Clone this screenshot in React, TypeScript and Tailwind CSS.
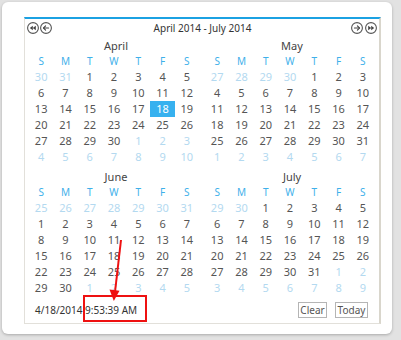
import React from 'react';

const font = { fontFamily: '"Noto Sans", "Open Sans", sans-serif' };

type Day = { d: number; other: boolean; selected: boolean };

// 6 weeks, always starting on a Sunday; a month that starts on Sunday shows a full week before it
function buildMonth(year: number, month: number): Day[] {
  const first = new Date(year, month, 1);
  const back = first.getDay() || 7;
  const start = new Date(year, month, 1 - back);
  const days: Day[] = [];
  for (let i = 0; i < 42; i++) {
    const dt = new Date(start.getFullYear(), start.getMonth(), start.getDate() + i);
    days.push({
      d: dt.getDate(),
      other: dt.getMonth() !== month,
      selected: dt.getFullYear() === 2014 && dt.getMonth() === 3 && dt.getDate() === 18 && dt.getMonth() === month,
    });
  }
  return days;
}

const weekDays = ['S', 'M', 'T', 'W', 'T', 'F', 'S'];

function NavIcon({ kind }: { kind: 'prev2' | 'prev' | 'next' | 'next2' }) {
  return (
    <svg width="12" height="12" viewBox="0 0 12 12" className="block">
      <circle cx="6" cy="6" r="5.4" fill="none" stroke="#555" strokeWidth="1.1" />
      {kind === 'prev' && (
        <g stroke="#444" strokeWidth="1.1" fill="none" strokeLinecap="round" strokeLinejoin="round">
          <path d="M8.6 6H3.6" />
          <path d="M5.6 3.9L3.5 6l2.1 2.1" />
        </g>
      )}
      {kind === 'next' && (
        <g stroke="#444" strokeWidth="1.1" fill="none" strokeLinecap="round" strokeLinejoin="round">
          <path d="M3.4 6h5" />
          <path d="M6.4 3.9L8.5 6 6.4 8.1" />
        </g>
      )}
      {kind === 'prev2' && (
        <g fill="#444">
          <path d="M2.8 6L5.8 3.8v4.4z" />
          <path d="M5.8 6L8.8 3.8v4.4z" />
        </g>
      )}
      {kind === 'next2' && (
        <g fill="#444">
          <path d="M9.2 6L6.2 3.8v4.4z" />
          <path d="M6.2 6L3.2 3.8v4.4z" />
        </g>
      )}
    </svg>
  );
}

function Month({ name, year, month }: { name: string; year: number; month: number }) {
  const days = buildMonth(year, month);
  return (
    <div className="w-[170px]">
      <div className="h-[15px] flex items-center justify-center text-[11px] text-[#444] pl-[4px]">{name}</div>
      <div className="grid grid-cols-7 h-[15px]">
        {weekDays.map((w, i) => (
          <div key={i} className="flex items-center justify-center text-[10px] text-[#3eb0ea]">
            {w}
          </div>
        ))}
      </div>
      <div className="grid grid-cols-7">
        {days.map((day, i) => (
          <div
            key={i}
            className={
              day.selected
                ? 'h-[16px] flex items-center justify-center text-[11px] bg-[#37b1ef] text-white'
                : day.other
                ? 'h-[16px] flex items-center justify-center text-[11px] text-[#b3d9f0]'
                : 'h-[16px] flex items-center justify-center text-[11px] text-[#555]'
            }
          >
            {day.d}
          </div>
        ))}
      </div>
    </div>
  );
}

export default function App() {
  return (
    <div className="w-[401px] h-[340px] bg-[#e2e2e2] pt-[2px] pl-[2px] overflow-hidden" style={font}>
      <div className="relative w-[390px] h-[332px] bg-white rounded-[6px] shadow-[0_1px_3px_rgba(0,0,0,0.25)] pt-[15px] pl-[22px]">
        {/* calendar */}
        <div className="w-[357px] h-[307px] border-l border-b border-[#e2e0da] border-r-2 border-r-[#d9d6cc] border-t-2 border-t-[#1ba1e2] flex flex-col">
          <div className="h-[20px] flex items-start justify-between px-[2px] pt-[3px]">
            <div className="flex gap-[1px]">
              <NavIcon kind="prev2" />
              <NavIcon kind="prev" />
            </div>
            <div className="text-[10px] text-[#333] leading-[12px] pl-[2px]">April 2014 - July 2014</div>
            <div className="flex gap-[2px]">
              <NavIcon kind="next" />
              <NavIcon kind="next2" />
            </div>
          </div>

          <div className="flex justify-between px-[4px] pt-[0px]">
            <Month name="April" year={2014} month={3} />
            <Month name="May" year={2014} month={4} />
          </div>
          <div className="flex justify-between px-[4px] mt-[5px]">
            <Month name="June" year={2014} month={5} />
            <Month name="July" year={2014} month={6} />
          </div>

          <div className="mt-[6px] flex items-center justify-between pl-[10px] pr-[11px]">
            <span className="text-[10px] text-[#333]">4/18/2014 9:53:39 AM</span>
            <div className="flex gap-[8px]">
              <button className="h-[16px] w-[29px] border border-[#b5b5b5] text-[10px] text-[#555] leading-none bg-white">
                Clear
              </button>
              <button className="h-[16px] w-[33px] border border-[#b5b5b5] text-[10px] text-[#555] leading-none bg-white">
                Today
              </button>
            </div>
          </div>
        </div>

        {/* annotation overlay */}
        <div className="absolute left-[81px] top-[293px] w-[64px] h-[27px] border-2 border-[#ee1111]" />
        <svg className="absolute left-0 top-0 pointer-events-none" width="390" height="332" viewBox="0 0 390 332">
          <line x1="119" y1="238" x2="113" y2="290" stroke="#ee1111" strokeWidth="2" />
          <path d="M107.5 287.5L117.5 288.7L111.8 299z" fill="#ee1111" />
        </svg>
      </div>
    </div>
  );
}
